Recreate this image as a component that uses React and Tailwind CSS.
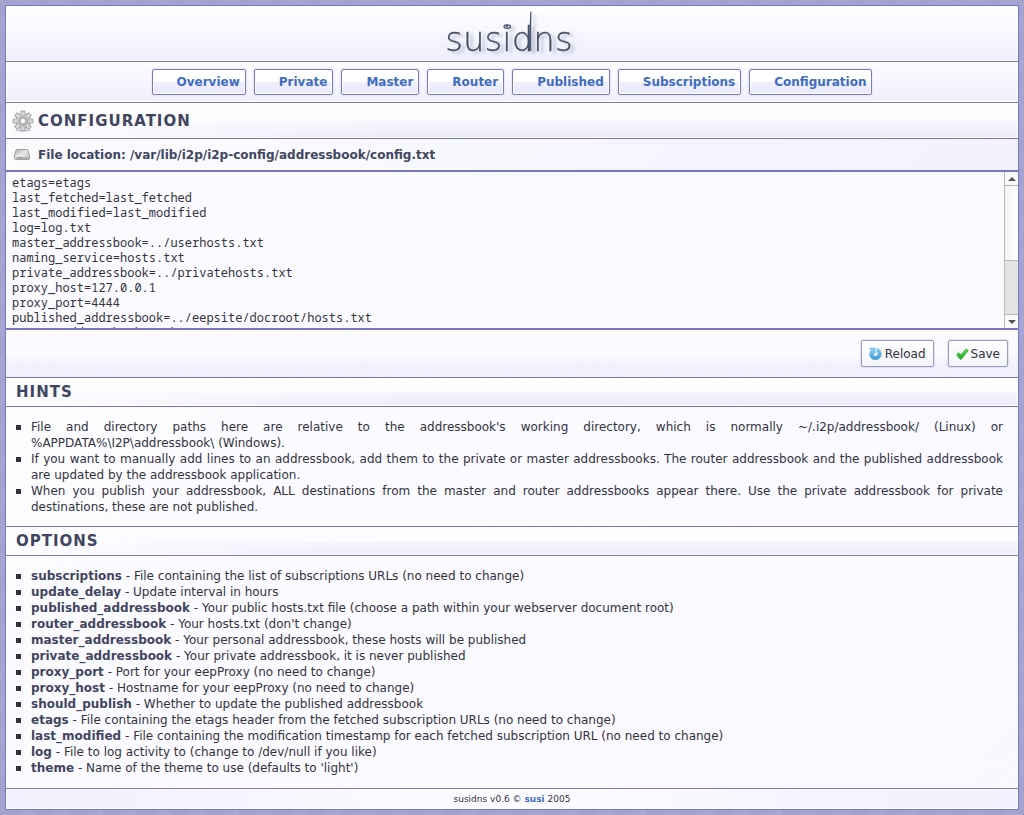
import React from "react";

const NAV = ["Overview", "Private", "Master", "Router", "Published", "Subscriptions", "Configuration"];

const CONFIG = `etags=etags
last_fetched=last_fetched
last_modified=last_modified
log=log.txt
master_addressbook=../userhosts.txt
naming_service=hosts.txt
private_addressbook=../privatehosts.txt
proxy_host=127.0.0.1
proxy_port=4444
published_addressbook=../eepsite/docroot/hosts.txt
router_addressbook=../hosts.txt
should_publish=false
subscriptions=subscriptions.txt
theme=light
update_delay=12
update_direct=false
`;

const HINTS = [
  "File and directory paths here are relative to the addressbook's working directory, which is normally ~/.i2p/addressbook/ (Linux) or %APPDATA%\\I2P\\addressbook\\\u00a0(Windows).",
  "If you want to manually add lines to an addressbook, add them to the private or master addressbooks. The router addressbook and the published addressbook are updated by the addressbook application.",
  "When you publish your addressbook, ALL destinations from the master and router addressbooks appear there. Use the private addressbook for private destinations, these are not published.",
];

const OPTIONS = [
  ["subscriptions", "File containing the list of subscriptions URLs (no need to change)"],
  ["update_delay", "Update interval in hours"],
  ["published_addressbook", "Your public hosts.txt file (choose a path within your webserver document root)"],
  ["router_addressbook", "Your hosts.txt (don't change)"],
  ["master_addressbook", "Your personal addressbook, these hosts will be published"],
  ["private_addressbook", "Your private addressbook, it is never published"],
  ["proxy_port", "Port for your eepProxy (no need to change)"],
  ["proxy_host", "Hostname for your eepProxy (no need to change)"],
  ["should_publish", "Whether to update the published addressbook"],
  ["etags", "File containing the etags header from the fetched subscription URLs (no need to change)"],
  ["last_modified", "File containing the modification timestamp for each fetched subscription URL (no need to change)"],
  ["log", "File to log activity to (change to /dev/null if you like)"],
  ["theme", "Name of the theme to use (defaults to 'light')"],
];

function Logo() {
  return (
    <svg width="136" height="50" viewBox="0 0 136 50" role="img" aria-label="susidns">
      <defs>
        <filter id="logoShadow" x="-10%" y="-10%" width="125%" height="130%">
          <feDropShadow dx="4" dy="2" stdDeviation="1.5" floodColor="#8a90a8" floodOpacity="0.5" />
        </filter>
        <linearGradient id="logoInk" x1="0" y1="0" x2="0" y2="1">
          <stop offset="0" stopColor="#44546f" />
          <stop offset="1" stopColor="#48484f" />
        </linearGradient>
      </defs>
      <g filter="url(#logoShadow)">
        <text
          x="65"
          y="42"
          textAnchor="middle"
          fill="url(#logoInk)"
          stroke="#48505f"
          strokeWidth="0.3"
          className="font-['DejaVu_Sans'] text-[34px] font-extralight"
        >
          susidns
        </text>
        <path d="M85.2 42 L85.4 22 L86.3 2.5 L87.4 2.5 L87.2 22 L87.1 42Z" fill="#44546f" />
        <ellipse cx="63.2" cy="17.6" rx="3.2" ry="1.8" fill="none" stroke="#44546f" strokeWidth="1.3" />
      </g>
    </svg>
  );
}

function Gear() {
  const teeth = [0, 45, 90, 135, 180, 225, 270, 315];
  return (
    <svg width="22" height="22" viewBox="0 0 22 22" aria-hidden="true" className="shrink-0">
      <defs>
        <linearGradient id="gearMetal" x1="0" y1="0" x2="1" y2="1">
          <stop offset="0" stopColor="#e2e2e0" />
          <stop offset="1" stopColor="#b4b4b2" />
        </linearGradient>
      </defs>
      <ellipse cx="11" cy="20.4" rx="8" ry="1.3" fill="#c9c9d3" />
      <g fill="#cfcfcd" stroke="#8c8c8a" strokeWidth="0.8">
        {teeth.map((a) => (
          <path key={a} d="M8.9 5 L8.9 1.7 Q8.9 1.1 9.5 1.1 L12.5 1.1 Q13.1 1.1 13.1 1.7 L13.1 5Z" transform={`rotate(${a} 11 11)`} />
        ))}
      </g>
      <circle cx="11" cy="11" r="7" fill="url(#gearMetal)" stroke="#8c8c8a" strokeWidth="0.8" />
      <g fill="#d4d4d2">
        {teeth.map((a) => (
          <path key={a} d="M9.4 1.7 H12.6 V6 H9.4Z" transform={`rotate(${a} 11 11)`} />
        ))}
      </g>
      <circle cx="11" cy="11" r="4.8" fill="#c4c4c2" stroke="#a2a2a0" strokeWidth="0.8" />
      <circle cx="11" cy="11" r="3.1" fill="#ececf2" stroke="#929290" strokeWidth="0.9" />
      <circle cx="11" cy="11" r="1.8" fill="#fafaff" />
    </svg>
  );
}

function Drive() {
  return (
    <svg width="16" height="16" viewBox="0 0 16 16" aria-hidden="true" className="shrink-0">
      <defs>
        <linearGradient id="driveTop" x1="0" y1="0" x2="1" y2="1">
          <stop offset="0" stopColor="#b0b0ae" />
          <stop offset="0.5" stopColor="#e8e8e6" />
          <stop offset="1" stopColor="#a6a6a4" />
        </linearGradient>
      </defs>
      <path d="M3 2.5 H13 Q13.8 2.5 14 3.3 L15.5 9 V11.7 Q15.5 12.5 14.7 12.5 H1.3 Q.5 12.5 .5 11.7 V9 L2 3.3 Q2.2 2.5 3 2.5Z" fill="url(#driveTop)" stroke="#a0a29f" />
      <path d="M1.5 9.5 H14.5 V11.5 H1.5Z" fill="#bdbfbc" />
      <path d="M1.5 9 H14.5" stroke="#f6f6f6" strokeWidth="0.8" />
      <path d="M3 11 H9 M11.5 11 H13.5" stroke="#8f918e" strokeWidth="1" />
    </svg>
  );
}

function ReloadIcon() {
  return (
    <svg width="14" height="14" viewBox="0 0 14 14" aria-hidden="true">
      <defs>
        <linearGradient id="reloadBlue" x1="0" y1="0" x2="0" y2="1">
          <stop offset="0" stopColor="#8fd0f2" />
          <stop offset="1" stopColor="#3a98d8" />
        </linearGradient>
      </defs>
      <path d="M.6 1.2 H6.2 V6.8 L4.6 5.4 C3.7 7.2 4.6 9.2 6.5 9.2 C8.8 9.2 9.6 6.6 8 5 V1.6 C10.7 2.3 12.4 4.5 12.3 7.2 C12.2 10.4 9.7 12.8 6.5 12.8 C3.2 12.8 .7 10.4 .7 7.2 C.7 5.7 1.3 4.4 2.3 3.2Z" fill="url(#reloadBlue)" stroke="#5cb0e2" strokeWidth=".6" />
    </svg>
  );
}

function CheckIcon() {
  return (
    <svg width="14" height="14" viewBox="0 0 14 14" aria-hidden="true">
      <defs>
        <linearGradient id="checkGreen" x1="0" y1="0" x2="0" y2="1">
          <stop offset="0" stopColor="#5edb4f" />
          <stop offset="1" stopColor="#1ea52c" />
        </linearGradient>
      </defs>
      <path d="M.6 7.8 L2.6 5.8 L4.8 7.8 L10.2 2 L12.2 3.6 L5.4 12.2 H4.2Z" fill="url(#checkGreen)" stroke="#33b33a" strokeWidth=".9" strokeLinejoin="round" />
    </svg>
  );
}

function SectionTitle({ children }) {
  return (
    <h2 className="border-b border-[#7778bf] bg-[linear-gradient(to_right,#fcfcff,transparent_40%),linear-gradient(to_bottom,#fff_0%,#fcfcff_50%,#f4f4fe_54%,#ececfc_100%)] px-[10px] text-[15px] leading-7 font-bold tracking-[1px] text-[#41465f] uppercase shadow-[inset_0_0_0_1px_#fff]">
      {children}
    </h2>
  );
}

function Bullets({ children }) {
  return <ul className="list-none px-[10px] pt-3 pb-[11px] text-justify">{children}</ul>;
}

function Bullet({ children }) {
  return (
    <li className="flex gap-[10px] pr-[5px]">
      <span className="mt-[6px] size-[5px] shrink-0 bg-[#33333f]" />
      <p className="min-w-0 flex-1">{children}</p>
    </li>
  );
}

function ScrollRail() {
  return (
    <div aria-hidden="true" className="flex w-[14px] shrink-0 flex-col border-l border-[#b8b8b8] bg-[#e3e3e3]">
      <span className="flex h-[13px] items-center justify-center bg-[#fafafa]">
        <svg width="8" height="4" viewBox="0 0 8 4">
          <path d="M0 4 L4 0 L8 4Z" fill="#555" />
        </svg>
      </span>
      <span className="h-[76px] border-y border-[#b8b8b8] bg-[linear-gradient(to_right,#f2f4f2,#fff)]" />
      <span className="mt-auto flex h-[14px] items-center justify-center border-t border-[#b8b8b8] bg-[#fafafa]">
        <svg width="8" height="4" viewBox="0 0 8 4">
          <path d="M0 0 L4 4 L8 0Z" fill="#555" />
        </svg>
      </span>
    </div>
  );
}

export default function App() {
  return (
    <div className="min-h-screen bg-[#a6a5d1] bg-[repeating-linear-gradient(45deg,#ffffff10_0_1px,transparent_1px_24px),repeating-linear-gradient(135deg,#6060a00c_0_12px,transparent_12px_24px)] p-[5px] font-['DejaVu_Sans',sans-serif] text-xs leading-4 text-[#33333f]">
      <main className="border border-[#7778bf] bg-[linear-gradient(135deg,#fff_0%,#fafaff_50%,#f8f8ff_100%)]">
        <header className="flex h-14 items-center justify-center border-b border-[#7778bf] bg-[linear-gradient(to_bottom,#fff,#eeeefe)] shadow-[inset_0_0_0_1px_#fff]">
          <Logo />
        </header>

        <nav className="flex flex-wrap justify-center gap-2 border-b border-[#7778bf] bg-[linear-gradient(to_bottom,#fcfcff,#f0f0fd)] py-[7px] shadow-[inset_0_0_0_1px_#fff]">
          {NAV.map((name) => (
            <a
              key={name}
              href="#"
              className="rounded-xs border border-[#7778bf] bg-[linear-gradient(to_bottom,#fff_0%,#fff_50%,#efeffe_50%,#e9e9fc_100%)] py-1 pr-[5px] pl-6 font-bold text-[#3f6cc0] shadow-[inset_0_0_0_1px_#fff,0_0_2px_#c8c8e8]"
            >
              {name}
            </a>
          ))}
        </nav>

        <div className="flex h-9 items-center gap-1 border-b border-[#7778bf] bg-[linear-gradient(to_right,#fcfcff,transparent_40%),linear-gradient(to_bottom,#fff_0%,#fcfcff_50%,#f5f5fe_54%,#ececfc_100%)] px-[6px] shadow-[inset_0_0_0_1px_#fff]">
          <Gear />
          <h1 className="text-[15px] font-bold tracking-[1px] text-[#41465f] uppercase">Configuration</h1>
        </div>

        <form>
          <h3 className="flex h-[33px] items-center gap-2 border-b-2 border-[#7778bf] bg-[linear-gradient(135deg,#fcfcff,#f2f2fe)] px-2 font-bold text-[#41465f]">
            <Drive />
            <label htmlFor="config">File location: /var/lib/i2p/i2p-config/addressbook/config.txt</label>
          </h3>
          <div className="flex">
            <textarea
              id="config"
              defaultValue={CONFIG}
              spellCheck={false}
              className="block h-[156px] min-w-0 flex-1 resize-none overflow-y-auto bg-[#fbfbff] px-[6px] py-[3px] font-['Droid_Sans_Mono','Noto_Sans_Mono','DejaVu_Sans_Mono',monospace] text-xs leading-[15px] text-[#33333f] outline-none"
            />
            <ScrollRail />
          </div>
          <div className="flex justify-end gap-[14px] border-t-2 border-b border-[#7778bf] bg-[linear-gradient(to_bottom,#fcfcff_0%,#fafaff_50%,#fafaff00_80%),repeating-linear-gradient(135deg,#efeffd_0_2px,#f3f3ff_2px_4px)] px-[10px] py-[10px]">
            <button type="reset" className="flex h-[27px] items-center gap-[2px] rounded-xs border border-[#9a9bbd] bg-[linear-gradient(to_bottom,#fff,#f3f3fb)] px-[7px] shadow-[0_0_2px_#a8a8d0]">
              <ReloadIcon />
              Reload
            </button>
            <button type="submit" className="flex h-[27px] items-center gap-[1px] rounded-xs border border-[#9a9bbd] bg-[linear-gradient(to_bottom,#fff,#f3f3fb)] px-[7px] shadow-[0_0_2px_#a8a8d0]">
              <CheckIcon />
              Save
            </button>
          </div>
        </form>

        <section className="border-b border-[#7778bf]">
          <SectionTitle>Hints</SectionTitle>
          <Bullets>
            {HINTS.map((hint) => (
              <Bullet key={hint}>{hint}</Bullet>
            ))}
          </Bullets>
        </section>

        <section className="pb-[1px]">
          <SectionTitle>Options</SectionTitle>
          <Bullets>
            {OPTIONS.map(([name, text]) => (
              <Bullet key={name}>
                <b className="text-[#41465f]">{name}</b> - {text}
              </Bullet>
            ))}
          </Bullets>
        </section>

        <footer className="border-t border-[#7778bf] bg-[linear-gradient(to_right,#f0f0fe,#fcfcff_50%,#f0f0fe)] text-center text-[9px] leading-5 shadow-[inset_0_0_0_1px_#fff]">
          susidns v0.6 ©{" "}
          <a href="#" className="font-bold text-[#3f6cc0]">
            susi
          </a>{" "}
          2005
        </footer>
      </main>
    </div>
  );
}
